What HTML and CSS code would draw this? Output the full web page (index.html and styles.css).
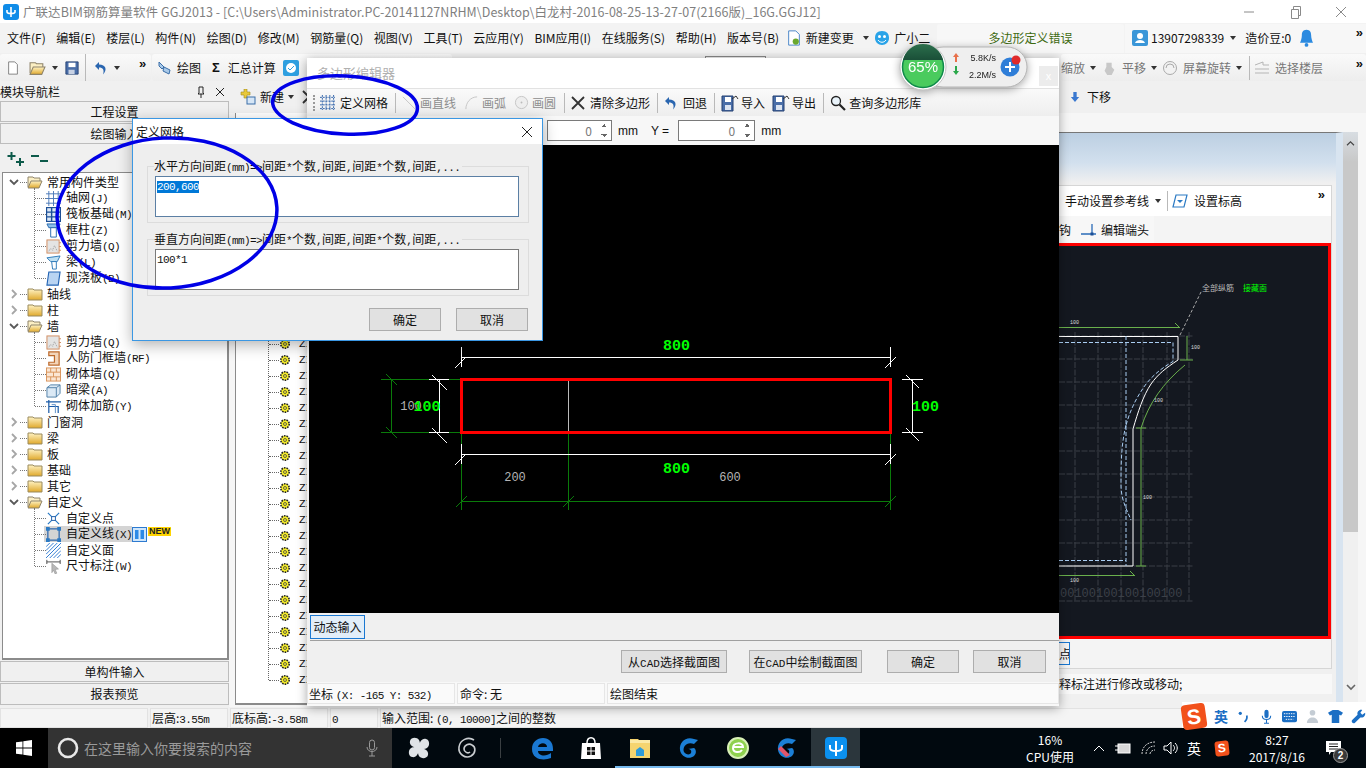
FILE: index.html
```html
<!DOCTYPE html>
<html lang="zh-CN">
<head>
<meta charset="utf-8">
<title>广联达BIM钢筋算量软件</title>
<link rel="stylesheet" href="styles.css">
</head>
<body>
<svg class="sprite" aria-hidden="true">
  <defs>
    <linearGradient id="gold" x1="0" y1="0" x2="0" y2="1"><stop offset="0" stop-color="#fff3c4"/><stop offset="1" stop-color="#e0a92c"/></linearGradient>
    <linearGradient id="ball" x1="0" y1="0" x2="0" y2="1"><stop offset="0" stop-color="#2b6f4c"/><stop offset="1" stop-color="#1a4f38"/></linearGradient>
    <symbol id="folder" viewBox="0 0 16 14"><path d="M1 3V2h5l1 1h8v10H1z" fill="url(#gold)" stroke="#9a8a5c"/></symbol>
    <symbol id="folder-open" viewBox="0 0 16 14"><path d="M1 12V2h5l1 1h6v3" fill="#fbefc4" stroke="#8f846a"/><path d="M1 13l3-7h11l-3 7z" fill="url(#gold)" stroke="#8f846a"/></symbol>
    <symbol id="chev-r" viewBox="0 0 10 10"><path d="M3 1l4 4-4 4" fill="none" stroke="#a6a6a6" stroke-width="1.8"/></symbol>
    <symbol id="chev-d" viewBox="0 0 10 10"><path d="M1 3l4 4 4-4" fill="none" stroke="#595959" stroke-width="1.8"/></symbol>
    <symbol id="i-grid" viewBox="0 0 16 16"><path d="M0 3h16M0 8h16M0 13h16M3 0v16M8 0v16M13 0v16" stroke="#4a78b8" fill="none"/></symbol>
    <symbol id="i-raft" viewBox="0 0 16 16"><rect x=".5" y=".5" width="15" height="15" fill="#dce8f6" stroke="#1c4f96" stroke-width="1.5"/><path d="M0 5.500h16M0 10.500h16M6 0v16" stroke="#1c4f96" stroke-width="1.500"/></symbol>
    <symbol id="i-col" viewBox="0 0 16 16"><path d="M1 1h14l-2 4H3z" fill="#8ec0ea" stroke="#2468ae"/><path d="M5 5h6v10H5z" fill="#fff" stroke="#2468ae"/></symbol>
    <symbol id="i-wall" viewBox="0 0 16 16"><rect x="1" y="1" width="13" height="14" fill="#e4e4e4" stroke="#d08a5c"/><path d="M3 13l2-3 2 2 2-5 3 6" stroke="#999" stroke-dasharray="1 1" fill="none"/><path d="M14 4h2M14 8h2M14 12h2" stroke="#d08a5c"/></symbol>
    <symbol id="i-beam" viewBox="0 0 16 16"><path d="M1 3l14-2-3 6H5z" fill="#bfe0f2" stroke="#2a78b8"/><path d="M6 7h5v8H7z" fill="#fff" stroke="#2a78b8"/></symbol>
    <symbol id="i-slab" viewBox="0 0 16 16"><path d="M3 1h12l-2 14H1z" fill="#b9d4f2" stroke="#2464b4" stroke-width="1.200"/></symbol>
    <symbol id="i-door" viewBox="0 0 16 16"><path d="M3 1h11v14H3v-3h6V5H3z" fill="#f3d5ba" stroke="#bd6a2c" stroke-width="1.300"/></symbol>
    <symbol id="i-brick" viewBox="0 0 16 16"><rect x=".5" y="1" width="15" height="14" fill="#fbe6d3" stroke="#d8935a"/><path d="M0 5.500h16M0 10.500h16M5 1v4.500M11 1v4.500M8 5.500v5M5 10.500v4.500M11 10.500v4.500" stroke="#d8935a"/></symbol>
    <symbol id="i-dbeam" viewBox="0 0 16 16"><path d="M1 5l4-3h10v9l-4 4H1z" fill="#dbe9f5" stroke="#4f7fa8"/><path d="M1 5h10v10M11 5l4-3" stroke="#4f7fa8" fill="none"/></symbol>
    <symbol id="i-rebar" viewBox="0 0 16 16"><path d="M0 3h16M3 1v14M3 8h10v7" stroke="#1c5ca8" stroke-width="1.300" fill="none"/><path d="M6 6h4v9" stroke="#5a8cc8" fill="none"/></symbol>
    <symbol id="i-point" viewBox="0 0 16 16"><path d="M2 2l12 12M14 2L2 14" stroke="#2b7ac4" stroke-width="1.300"/><rect x="6" y="6" width="4" height="4" fill="#fff" stroke="#1c5ca8"/></symbol>
    <symbol id="i-line" viewBox="0 0 16 16"><rect x="2" y="2" width="12" height="12" fill="none" stroke="#1c5ca8" stroke-width="1.200"/><path d="M0 0h4v4H0zM12 0h4v4h-4zM0 12h4v4H0zM12 12h4v4h-4z" fill="#2b7ac4"/></symbol>
    <symbol id="i-hatch" viewBox="0 0 16 16"><path d="M0 4l4-4M0 8l8-8M0 12L12 0M0 16L16 0M4 16L16 4M8 16l8-8M12 16l4-4" stroke="#2b78d0"/></symbol>
    <symbol id="i-dim" viewBox="0 0 16 18"><path d="M0 1v5M16 1v5M0 3.500h16" stroke="#333"/><path d="M6 5l8 7-4 .5 2 4.500-2 1-2-4.500-2 3z" fill="#b8b8b8" stroke="#888" stroke-width=".6"/></symbol>
    <symbol id="i-gear" viewBox="0 0 12 12"><circle cx="6" cy="6" r="4.200" fill="#f6ee2a" stroke="#222" stroke-width="1.600" stroke-dasharray="1.600 1"/><circle cx="6" cy="6" r="1.500" fill="#f6ee2a" stroke="#444" stroke-width=".8"/></symbol>
    <symbol id="i-defgrid" viewBox="0 0 16 16"><path d="M0 2.500h16M0 6.500h16M0 10.500h16M0 14.500h16M2.500 0v16M6.500 0v16M10.500 0v16M14.500 0v16" stroke="#2b5fa8" stroke-dasharray="2 1"/></symbol>
    <symbol id="i-x" viewBox="0 0 14 14"><path d="M1 1l12 12M13 1L1 13" stroke="#333" stroke-width="1.800"/></symbol>
    <symbol id="i-undo" viewBox="0 0 14 14"><path d="M5 1L1 5l4 4V6.500c4 0 5.500 2.500 4 7 4.500-4.500 3-10-4-10z" fill="#2a66b0"/></symbol>
    <symbol id="i-disk" viewBox="0 0 16 16"><path d="M1 1h14v14H1z" fill="#4a6ea8" stroke="#223f70"/><rect x="4" y="2" width="8" height="5" fill="#fff"/><rect x="4" y="10" width="7" height="5" fill="#c8d2e4"/></symbol>
    <symbol id="i-inout" viewBox="0 0 18 18"><path d="M1 2h11v15H1z" fill="#4a6ea8" stroke="#223f70"/><rect x="4" y="3" width="6" height="5" fill="#fff"/><rect x="4" y="11" width="6" height="5" fill="#dbe3f0"/><path d="M11 5l4-3 2 3" fill="none" stroke="#333"/></symbol>
    <symbol id="i-search" viewBox="0 0 16 16"><circle cx="6" cy="6" r="4.500" fill="#eaf4fb" stroke="#222" stroke-width="1.300"/><path d="M9.500 9.500L15 15" stroke="#222" stroke-width="2.200"/></symbol>
    <symbol id="g-blue" viewBox="0 0 24 24"><path d="M17 3c-8-3-15 3-14 11 1 7 9 10 14 6 3-3 2-7 0-8l-6 1c2 0 4 1 3 4-1 2-5 2-7-1-2-5 3-11 10-8l4-4z" fill="#1b7fd6"/></symbol>
  </defs>
</svg>

<div class="app">
  <header class="titlebar">
    <svg class="app-logo" viewBox="0 0 16 16"><rect width="16" height="16" rx="3" fill="#0f8ce8"/><path d="M8 3v10M4 6v2c0 2 8 2 8 0V6" stroke="#fff" stroke-width="1.600" fill="none"/></svg>
    <span class="title-text">广联达BIM钢筋算量软件 GGJ2013 - [C:\Users\Administrator.PC-20141127NRHM\Desktop\白龙村-2016-08-25-13-27-07(2166版)_16G.GGJ12]</span>
    <div class="win-btns">
      <svg viewBox="0 0 46 22"><path d="M18 11h10" stroke="#8a8a8a"/></svg>
      <svg viewBox="0 0 46 22"><path d="M19.500 8.500h7v9h-7zM21.500 8.500v-3h7v9h-2" fill="none" stroke="#8a8a8a"/></svg>
      <svg viewBox="0 0 46 22"><path d="M18 6l10 10M28 6L18 16" stroke="#8a8a8a"/></svg>
    </div>
  </header>

  <nav class="menubar">
    <div class="menu-items">
      <span>文件(F)</span><span>编辑(E)</span><span>楼层(L)</span><span>构件(N)</span><span>绘图(D)</span><span>修改(M)</span><span>钢筋量(Q)</span><span>视图(V)</span><span>工具(T)</span><span>云应用(Y)</span><span>BIM应用(I)</span><span>在线服务(S)</span><span>帮助(H)</span><span>版本号(B)</span>
      <span class="with-icon change"><svg class="ic16" viewBox="0 0 16 18"><path d="M2 1h8l4 4v12H2z" fill="#fff" stroke="#3b7cc4"/><circle cx="10" cy="13" r="3.500" fill="#6aa82e"/></svg>新建变更<i class="caret"></i></span>
      <span class="with-icon"><svg class="ic16" viewBox="0 0 16 16"><path d="M8 1c5 0 7 3 7 7s-3 7-7 7-7-3-7-7 2-7 7-7z" fill="#29a3e8"/><circle cx="5.500" cy="6.500" r="1.500" fill="#fff"/><circle cx="10.500" cy="6.500" r="1.500" fill="#fff"/><path d="M4 10c2 3 6 3 8 0" stroke="#fff" fill="none"/></svg>广小二</span>
    </div>
    <div class="error-tab">多边形定义错误</div>
    <div class="user-area">
      <svg class="ic16" viewBox="0 0 16 16"><rect width="16" height="16" rx="2" fill="#3a96d8"/><circle cx="8" cy="6" r="3" fill="#fff"/><path d="M3 13c1-4 9-4 10 0z" fill="#fff"/></svg>
      <span class="phone">13907298339</span><i class="caret"></i>
      <span class="beans">造价豆:0</span>
      <svg class="bell" viewBox="0 0 14 20"><path d="M7 1c4 0 5 3 5 6s1 6 2 8H0c1-2 2-5 2-8s1-6 5-6z" fill="#2b8ae0"/><circle cx="7" cy="17.500" r="2" fill="#2b8ae0"/></svg>
      <span class="more">»</span>
    </div>
  </nav>

  <div class="toolbar">
    <div class="tool-group first">
      <svg class="ic14" viewBox="0 0 14 16"><path d="M2 1h7l3 3v11H2z" fill="#fff" stroke="#777"/></svg>
      <svg class="ic16 open" viewBox="0 0 16 14"><use href="#folder-open"/></svg><i class="caret"></i>
      <svg class="ic14 save" viewBox="0 0 16 16"><use href="#i-disk"/></svg>
      <b class="sep"></b>
      <svg class="ic14" viewBox="0 0 14 14"><use href="#i-undo"/></svg><i class="caret"></i>
      <span class="more">»</span>
    </div>
    <div class="tool-group second">
      <svg class="ic16" viewBox="0 0 16 16"><path d="M2 2l5 5-2 2-3-3zM7 7l6 3-1 4-6-3z" fill="#a9c9e8" stroke="#3a6ea8"/></svg><span>绘图</span>
      <b class="sigma">Σ</b><span>汇总计算</span>
      <svg class="ic16" viewBox="0 0 16 16"><rect width="16" height="16" rx="2" fill="#2e9fe0"/><circle cx="8" cy="8" r="5" fill="#fff"/><path d="M5 8l2 2 4-4" stroke="#2e9fe0" fill="none"/></svg>
    </div>
    <div class="tab-stub"></div>
    <div class="tool-group right">
      <span class="muted">缩放</span><i class="caret"></i>
      <svg class="ic16" viewBox="0 0 16 18"><path d="M5 8V3h6v5l3 3-3 6H6L3 12z" fill="#c8c8c8"/></svg><span class="muted">平移</span><i class="caret"></i>
      <svg class="ic16" viewBox="0 0 16 16"><circle cx="8" cy="8" r="6.500" fill="#f2f2f2" stroke="#aaa"/><path d="M4 8a4 4 0 0 1 8 0" fill="none" stroke="#aaa"/></svg><span class="muted">屏幕旋转</span><i class="caret"></i>
      <b class="sep"></b>
      <svg class="ic16" viewBox="0 0 16 16"><path d="M1 5l8-3v3H15M1 9h14M1 13h14" stroke="#b5b5b5" fill="none"/></svg><span class="muted">选择楼层</span>
      <span class="more">»</span>
    </div>
  </div>

  <div class="workspace">
    <aside class="nav-panel">
      <div class="nav-head"><span>模块导航栏</span><span class="nav-head-btns">
        <svg viewBox="0 0 10 12"><path d="M3 1h4v6l1 1H2l1-1zM5 8v4" stroke="#222" fill="none"/></svg>
        <svg viewBox="0 0 10 12"><path d="M1 2l8 8M9 2l-8 8" stroke="#222"/></svg></span></div>
      <div class="nav-btn">工程设置</div>
      <div class="nav-btn">绘图输入</div>
      <div class="tree-tools">
        <svg viewBox="0 0 18 16"><path d="M4.500 1v8M.5 5h8M13 7v8M9 11h8" stroke="#0d5a4a" stroke-width="2"/></svg>
        <svg viewBox="0 0 18 16"><path d="M0 5h8M9 10h8" stroke="#0d5a4a" stroke-width="2"/></svg>
      </div>
      <div class="tree">
        <div class="node"><svg class="chev"><use href="#chev-d"/></svg><svg class="fold"><use href="#folder-open"/></svg><span>常用构件类型</span></div>
        <div class="kids">
          <div class="leaf"><svg class="lic"><use href="#i-grid"/></svg><span>轴网<em>(J)</em></span></div>
          <div class="leaf"><svg class="lic"><use href="#i-raft"/></svg><span>筏板基础<em>(M)</em></span></div>
          <div class="leaf"><svg class="lic"><use href="#i-col"/></svg><span>框柱<em>(Z)</em></span></div>
          <div class="leaf"><svg class="lic"><use href="#i-wall"/></svg><span>剪力墙<em>(Q)</em></span></div>
          <div class="leaf"><svg class="lic"><use href="#i-beam"/></svg><span>梁<em>(L)</em></span></div>
          <div class="leaf"><svg class="lic"><use href="#i-slab"/></svg><span>现浇板<em>(B)</em></span></div>
        </div>
        <div class="node"><svg class="chev"><use href="#chev-r"/></svg><svg class="fold"><use href="#folder"/></svg><span>轴线</span></div>
        <div class="node"><svg class="chev"><use href="#chev-r"/></svg><svg class="fold"><use href="#folder"/></svg><span>柱</span></div>
        <div class="node"><svg class="chev"><use href="#chev-d"/></svg><svg class="fold"><use href="#folder-open"/></svg><span>墙</span></div>
        <div class="kids">
          <div class="leaf"><svg class="lic"><use href="#i-wall"/></svg><span>剪力墙<em>(Q)</em></span></div>
          <div class="leaf"><svg class="lic"><use href="#i-door"/></svg><span>人防门框墙<em>(RF)</em></span></div>
          <div class="leaf"><svg class="lic"><use href="#i-brick"/></svg><span>砌体墙<em>(Q)</em></span></div>
          <div class="leaf"><svg class="lic"><use href="#i-dbeam"/></svg><span>暗梁<em>(A)</em></span></div>
          <div class="leaf"><svg class="lic"><use href="#i-rebar"/></svg><span>砌体加筋<em>(Y)</em></span></div>
        </div>
        <div class="node"><svg class="chev"><use href="#chev-r"/></svg><svg class="fold"><use href="#folder"/></svg><span>门窗洞</span></div>
        <div class="node"><svg class="chev"><use href="#chev-r"/></svg><svg class="fold"><use href="#folder"/></svg><span>梁</span></div>
        <div class="node"><svg class="chev"><use href="#chev-r"/></svg><svg class="fold"><use href="#folder"/></svg><span>板</span></div>
        <div class="node"><svg class="chev"><use href="#chev-r"/></svg><svg class="fold"><use href="#folder"/></svg><span>基础</span></div>
        <div class="node"><svg class="chev"><use href="#chev-r"/></svg><svg class="fold"><use href="#folder"/></svg><span>其它</span></div>
        <div class="node"><svg class="chev"><use href="#chev-d"/></svg><svg class="fold"><use href="#folder-open"/></svg><span>自定义</span></div>
        <div class="kids">
          <div class="leaf"><svg class="lic"><use href="#i-point"/></svg><span>自定义点</span></div>
          <div class="leaf"><div class="sel"><svg class="lic"><use href="#i-line"/></svg><span>自定义线<em>(X)</em></span></div>
            <svg class="mini" viewBox="0 0 15 15"><rect x=".5" y=".5" width="14" height="14" fill="#cfe6fb" stroke="#2d7ad0"/><path d="M3 3h3.500v9H3zM8.500 3H12v9H8.500z" fill="#2d8ae6"/></svg><span class="new-badge">NEW</span></div>
          <div class="leaf"><svg class="lic"><use href="#i-hatch"/></svg><span>自定义面</span></div>
          <div class="leaf"><svg class="lic"><use href="#i-dim"/></svg><span>尺寸标注<em>(W)</em></span></div>
        </div>
      </div>
      <div class="nav-btn low">单构件输入</div>
      <div class="nav-btn low">报表预览</div>
    </aside>

    <main class="center">
      <div class="center-top">
        <svg class="ic16" viewBox="0 0 16 16"><path d="M4 0h3v3h3v3H7v3H4V6H1V3h3z" fill="#e8c83a" stroke="#a08a20" stroke-width=".6"/><rect x="7" y="8" width="8" height="7" fill="#d6e6f6" stroke="#3a6ea8"/></svg>
        <span class="new-label">新建</span><i class="caret"></i>
        <svg class="ic14 new-x" viewBox="0 0 14 14"><use href="#i-x"/></svg>
        <span class="down-item"><svg class="ic12" viewBox="0 0 12 12"><path d="M4 0h4v6h3l-5 6-5-6h3z" fill="#3a78d0"/></svg>下移</span>
      </div>
      <div class="center-body">
        <section class="list-panel">
          <div class="gears">
            <div class="g-row"><svg class="gear"><use href="#i-gear"/></svg><span>ZI</span></div><div class="g-row"><svg class="gear"><use href="#i-gear"/></svg><span>ZI</span></div>
            <div class="g-row"><svg class="gear"><use href="#i-gear"/></svg><span>ZI</span></div><div class="g-row"><svg class="gear"><use href="#i-gear"/></svg><span>ZI</span></div>
            <div class="g-row"><svg class="gear"><use href="#i-gear"/></svg><span>ZI</span></div><div class="g-row"><svg class="gear"><use href="#i-gear"/></svg><span>ZI</span></div>
            <div class="g-row"><svg class="gear"><use href="#i-gear"/></svg><span>ZI</span></div><div class="g-row"><svg class="gear"><use href="#i-gear"/></svg><span>ZI</span></div>
            <div class="g-row"><svg class="gear"><use href="#i-gear"/></svg><span>ZI</span></div><div class="g-row"><svg class="gear"><use href="#i-gear"/></svg><span>ZI</span></div>
            <div class="g-row"><svg class="gear"><use href="#i-gear"/></svg><span>ZI</span></div><div class="g-row"><svg class="gear"><use href="#i-gear"/></svg><span>ZI</span></div>
            <div class="g-row"><svg class="gear"><use href="#i-gear"/></svg><span>ZI</span></div><div class="g-row"><svg class="gear"><use href="#i-gear"/></svg><span>ZI</span></div>
            <div class="g-row"><svg class="gear"><use href="#i-gear"/></svg><span>ZI</span></div><div class="g-row"><svg class="gear"><use href="#i-gear"/></svg><span>ZI</span></div>
            <div class="g-row"><svg class="gear"><use href="#i-gear"/></svg><span>ZI</span></div><div class="g-row"><svg class="gear"><use href="#i-gear"/></svg><span>ZI</span></div>
            <div class="g-row"><svg class="gear"><use href="#i-gear"/></svg><span>ZI</span></div><div class="g-row"><svg class="gear"><use href="#i-gear"/></svg><span>ZI</span></div>
            <div class="g-row"><svg class="gear"><use href="#i-gear"/></svg><span>ZI</span></div><div class="g-row"><svg class="gear"><use href="#i-gear"/></svg><span>ZI</span></div>
          </div>
        </section>
        <section class="side-window">
          <div class="side-title"></div>
          <div class="side-inner">
            <div class="side-tools">
              <span>手动设置参考线</span><i class="caret"></i><b class="sep"></b>
              <svg class="ic16" viewBox="0 0 16 16"><path d="M4 2h11l-3 12H1z" fill="#fff" stroke="#2b7ac4" stroke-width="1.200"/><path d="M5 7h6l-3 3z" fill="#2b7ac4"/></svg><span>设置标高</span>
              <span class="more">»</span>
            </div>
            <div class="side-tools2"><span>钩</span>
              <svg class="ic16" viewBox="0 0 16 16"><path d="M0 12h15M11 2v10" stroke="#2b6cb8" stroke-width="1.300"/><rect x="9.500" y="10.500" width="3" height="3" fill="#1c4f96"/></svg><span>编辑端头</span></div>
            <div class="side-canvas">
              <svg viewBox="1059 246 270 390" width="270" height="390">
                <path class="grid" d="M1059 336h134M1059 359h134M1059 382h134M1059 405h134M1059 428h134M1059 451h134M1059 474h134M1059 497h134M1059 520h134M1059 543h134M1059 566h134M1075 332v270M1098 332v270M1121 332v270M1143 332v270M1167 332v270M1189 332v270"/>
                <path class="outline" d="M1059 336.500h119v23.500c-12 8-20 14-27 24-8 12-13 28-18 45v137h-74"/>
                <path class="inner-dash" d="M1059 342.500h114v19c-14 8-25 18-32 30-6 9-12 22-15 34M1126 336v230M1059 560.500h67M1126 425c-5 20-5 40-5 60 0 15 6 25 10 35"/>
                <path class="dim" d="M1059 327.500h120M1175 323l5 5M1187 336v24M1180 360h13M1185 365c-22 18-36 38-44 63v138M1136 428h10M1059 575.500h75M1130 571l5 5M1136 566h10"/>
                <path class="leader" d="M1180 335l22-45"/>
                <text class="cad-mini" x="1070" y="324">100</text>
                <text class="cad-mini" x="1191" y="349">100</text>
                <text class="cad-mini" x="1154" y="402">100</text>
                <text class="cad-mini" x="1143" y="499">100</text>
                <text class="cad-mini" x="1070" y="582">100</text>
                <text class="cad-label" x="1202" y="291">全部纵筋</text>
                <text class="cad-label green" x="1243" y="291">接藏面</text>
                <text class="cad-axis" x="1060" y="597">00100100100100100</text>
                <path class="grid" d="M1059 601h134"/>
              </svg>
            </div>
            <div class="side-btns"><span class="pt-btn">点</span></div>
          </div>
          <div class="side-status"><span>释标注进行修改或移动;</span></div>
        </section>
        <div class="vscroll">
          <div class="v-thumb"><svg viewBox="0 0 10 8"><path d="M1 6l4-4 4 4" fill="none" stroke="#444" stroke-width="1.300"/></svg></div>
          <svg class="v-down" viewBox="0 0 10 8"><path d="M1 2l4 4 4-4" fill="none" stroke="#666" stroke-width="1.600"/></svg>
        </div>
      </div>
    </main>
  </div>

  <footer class="statusbar">
    <div class="st c0"></div>
    <div class="st c1">层高:<em>3.55m</em></div>
    <div class="st c2">底标高:<em>-3.58m</em></div>
    <div class="st c3"><em>0</em></div>
    <div class="st c4">输入范围: <em>(0, 10000]</em>之间的整数</div>
  </footer>

  <div class="taskbar">
    <div class="start"><svg viewBox="0 0 16 16"><path d="M0 2.300l6.500-.9v6.200H0zM7.300 1.300L16 0v7.600H7.300zM0 8.400h6.500v6.200L0 13.700zM7.300 8.400H16V16l-8.700-1.300z" fill="#fff"/></svg></div>
    <div class="search">
      <svg class="cortana" viewBox="0 0 22 22"><circle cx="11" cy="11" r="9" fill="none" stroke="#e8e8e8" stroke-width="2.600"/></svg>
      <span>在这里输入你要搜索的内容</span>
      <svg class="mic" viewBox="0 0 12 18"><rect x="3.500" y="1" width="5" height="10" rx="2.500" fill="none" stroke="#9a9a9a"/><path d="M1 8c0 6 10 6 10 0M6 13v4M3 17h6" fill="none" stroke="#9a9a9a"/></svg>
    </div>
    <div class="tile"><svg viewBox="0 0 24 24"><path d="M12 12C6 12 2 9 3 5s7-4 9-1 0 8 0 8zM12 12c0-6 3-10 7-9s4 7 1 9-8 0-8 0zM12 12c6 0 10 3 9 7s-7 4-9 1 0-8 0-8zM12 12c0 6-3 10-7 9s-4-7-1-9 8 0 8 0z" fill="#dfe3e6"/></svg></div>
    <div class="tile"><svg viewBox="0 0 24 24"><path d="M18 4C12 0 4 4 3 11c-1 7 6 12 12 9 5-3 5-9 1-11-3-2-8 0-8 4 0 3 4 5 6 3" fill="none" stroke="#c9cdd0" stroke-width="1.600"/></svg></div>
    <div class="tile-sep"></div>
    <div class="tile"><svg viewBox="0 0 24 24"><path d="M2 13C2 6 7 2 13 2c6 0 10 4 10 11v2H8c0 5 8 6 13 2v5c-7 3-19 2-19-9zm6-2h9c0-5-8-5-9 0z" fill="#1a78d2"/></svg></div>
    <div class="tile"><svg viewBox="0 0 24 24"><path d="M3 7h18l1 16H2z" fill="#fff"/><path d="M8 7c0-7 8-7 8 0" fill="none" stroke="#fff" stroke-width="1.500"/><path d="M8 11h3.500v3.500H8zM12.500 11H16v3.500h-3.500zM8 15.500h3.500V19H8zM12.500 15.500H16V19h-3.500z" fill="#111"/></svg></div>
    <div class="tile on"><svg viewBox="0 0 24 24"><path d="M2 3h8l2 2h10v17H2z" fill="#f5d46f"/><rect x="2" y="4" width="20" height="3" fill="#fbe9a6"/><path d="M8 20v-6l4-3 4 3v6z" fill="#2f9bd8"/></svg></div>
    <div class="tile on"><svg viewBox="0 0 24 24"><use href="#g-blue"/></svg></div>
    <div class="tile on"><svg viewBox="0 0 24 24"><circle cx="12" cy="12" r="10" fill="#8fd14f" stroke="#d9f0b8" stroke-width="2"/><path d="M7 11h10c0-5-10-5-10 1 0 5 7 5 9 2" fill="none" stroke="#fff" stroke-width="2"/></svg></div>
    <div class="tile on"><svg viewBox="0 0 24 24"><use href="#g-blue"/><path d="M3 13l8 8 4-2-9-9z" fill="#e2556a"/></svg></div>
    <div class="tile on active"><svg viewBox="0 0 24 24"><rect x="1" y="1" width="22" height="22" rx="4" fill="#0b90ee"/><path d="M12 5v15M6 9v3c0 4 12 4 12 0V9" stroke="#fff" stroke-width="2" fill="none"/></svg></div>
    <div class="cpu"><span>16%</span><span>CPU使用</span></div>
    <div class="tray">
      <svg viewBox="0 0 12 8" class="t-up"><path d="M1 7l5-5 5 5" fill="none" stroke="#fff"/></svg>
      <svg viewBox="0 0 16 12" class="t-batt"><rect x="3" y="2" width="12" height="9" fill="#d8d8d8" stroke="#fff"/><path d="M0 4h3M0 8h3" stroke="#fff"/></svg>
      <svg viewBox="0 0 16 14" class="t-wifi"><path d="M1 13c0-7 5-12 13-12M5 13c0-4 3-8 9-8M9 13c0-2 2-4 5-4" fill="none" stroke="#cfcfcf" stroke-dasharray="2 1"/></svg>
      <svg viewBox="0 0 16 14" class="t-vol"><path d="M1 5h3l4-4v12l-4-4H1z" fill="none" stroke="#fff"/><path d="M10 4c2 2 2 4 0 6M12 2c3 3 3 7 0 10" fill="none" stroke="#fff"/></svg>
      <span class="t-en">英</span>
      <span class="t-s">S</span>
      <div class="clock"><span>8:27</span><span>2017/8/16</span></div>
      <div class="notify"><svg viewBox="0 0 16 14"><path d="M0 0h15v11H5l-2 3v-3H0z" fill="#fff"/><path d="M3 3h9M3 5.500h9M3 8h9" stroke="#222"/></svg><span class="n-badge">2</span></div>
    </div>
  </div>
</div>

<section class="editor">
  <div class="ed-title">多边形编辑器<span class="ed-close">x</span></div>
  <div class="ed-tools">
    <span class="grip"></span>
    <svg class="ic15" viewBox="0 0 16 16"><use href="#i-defgrid"/></svg><span class="t">定义网格</span><b class="sep"></b>
    <svg class="ic15" viewBox="0 0 16 16"><path d="M1 2l13 13" stroke="#c4c4c4"/></svg><span class="t off">画直线</span>
    <svg class="ic15" viewBox="0 0 16 16"><path d="M2 15C2 8 7 2 14 2" stroke="#c4c4c4" fill="none"/></svg><span class="t off">画弧</span>
    <svg class="ic15" viewBox="0 0 16 16"><circle cx="8" cy="8" r="6.500" fill="#eee" stroke="#c4c4c4"/><circle cx="8" cy="8" r="1" fill="#bbb"/></svg><span class="t off">画圆</span><b class="sep"></b>
    <svg class="ic14" viewBox="0 0 14 14"><use href="#i-x"/></svg><span class="t">清除多边形</span><b class="sep"></b>
    <svg class="ic14" viewBox="0 0 14 14"><use href="#i-undo"/></svg><span class="t">回退</span><b class="sep"></b>
    <svg class="ic18" viewBox="0 0 18 18"><use href="#i-inout"/></svg><span class="t tight">导入</span>
    <svg class="ic18" viewBox="0 0 18 18"><use href="#i-inout"/></svg><span class="t tight">导出</span><b class="sep"></b>
    <svg class="ic16" viewBox="0 0 16 16"><use href="#i-search"/></svg><span class="t q">查询多边形库</span>
  </div>
  <div class="ed-coords">
    <div class="spin"><span>0</span><i class="spin-arrows"></i></div><span class="mm">mm</span>
    <span class="y-label">Y =</span>
    <div class="spin wide"><span>0</span><i class="spin-arrows"></i></div><span class="mm m2">mm</span>
  </div>
  <div class="ed-canvas">
    <svg viewBox="309 145 750 468" width="750" height="468">
      <path class="d-green" d="M381 379.500h80M381 432.500h80M391.500 379v54M386 374l11 11M386 427l11 11M461.500 433v77M568.500 433v77M890.500 433v77M461 501.500h430M456 507l11-11M563 507l11-11M885 507l11-11"/>
      <path class="d-white" d="M429 379.500h20M429 432.500h20M439.500 379v53M432 375l15 15M432 428l15 15M461 357.500h430M461.500 347v20M890.500 347v20M455 368l11-11M885 368l11-11M461 454.500h430M461.500 444v20M890.500 444v20M455 465l11-11M885 465l11-11M902 379.500h21M902 432.500h21M912.500 379v53M906 375l13 13M906 428l13 13"/>
      <rect class="d-red" x="461.500" y="379.500" width="429" height="53"/>
      <path class="d-mid" d="M568.500 381v50"/>
      <text class="cad-big" x="676.500" y="350">800</text>
      <text class="cad-big" x="676.500" y="473">800</text>
      <text class="cad-grey" x="411" y="410">100</text>
      <text class="cad-big" x="427" y="411">100</text>
      <text class="cad-big" x="925.500" y="411">100</text>
      <text class="cad-grey" x="515" y="481">200</text>
      <text class="cad-grey" x="730" y="481">600</text>
    </svg>
  </div>
  <div class="ed-dyn"><span class="dyn-btn">动态输入</span></div>
  <div class="ed-actions">
    <span class="btn b1">从<em>CAD</em>选择截面图</span>
    <span class="btn b2">在<em>CAD</em>中绘制截面图</span>
    <span class="btn b3">确定</span>
    <span class="btn b3">取消</span>
  </div>
  <div class="ed-status">
    <div class="es c1">坐标 <em>(X: -165 Y: 532)</em></div>
    <div class="es c2">命令: 无</div>
    <div class="es c3">绘图结束</div>
  </div>
</section>

<section class="dialog">
  <div class="dlg-title"><span>定义网格</span><svg viewBox="0 0 12 12"><path d="M1 1l10 10M11 1L1 11" stroke="#222"/></svg></div>
  <div class="dlg-body">
    <div class="fset">
      <div class="legend">水平方向间距<em>(mm)=&gt;</em>间距<em>*</em>个数<em>,</em>间距<em>,</em>间距<em>*</em>个数<em>,</em>间距<em>,...</em></div>
      <div class="field focus"><span class="selected">200,600</span></div>
    </div>
    <div class="fset">
      <div class="legend">垂直方向间距<em>(mm)=&gt;</em>间距<em>*</em>个数<em>,</em>间距<em>,</em>间距<em>*</em>个数<em>,</em>间距<em>,...</em></div>
      <div class="field">100*1</div>
    </div>
    <div class="dlg-actions"><span class="btn dlg">确定</span><span class="btn dlg">取消</span></div>
  </div>
</section>

<svg class="marks" viewBox="0 0 1366 768" aria-hidden="true">
  <ellipse cx="345" cy="105" rx="72.500" ry="29" transform="rotate(3 345 105)"/>
  <ellipse cx="167" cy="213" rx="110" ry="75" transform="rotate(-3 167 213)"/>
</svg>

<div class="net-widget">
  <svg viewBox="0 0 132 50" width="132" height="50">
    <rect x="24" y="4" width="104" height="40" rx="20" fill="#efefef" stroke="#b5b5b5"/>
    <circle cx="24" cy="24" r="23" fill="#fff" stroke="#c4c4c4"/>
    <circle cx="24" cy="24" r="20.500" fill="#4acb5e" stroke="#0f8a4a" stroke-width="1.500"/>
    <path d="M4 17a20.500 20.500 0 0 1 40 0z" fill="url(#ball)"/>
    <text class="w-pct" x="24" y="29">65%</text>
    <path d="M54 14l3-4 3 4h-2v5h-2v-5z" fill="#e8704a"/>
    <path d="M54 28l3 4 3-4h-2v-5h-2v5z" fill="#2aa84a"/>
    <text class="w-sp" x="97" y="18">5.8K/s</text>
    <text class="w-sp" x="97" y="35">2.2M/s</text>
    <circle cx="111" cy="24" r="9.500" fill="#2f7ed8"/>
    <path d="M111 19v10M106 24h10" stroke="#fff" stroke-width="2"/>
    <circle cx="117" cy="17" r="4.500" fill="#e02a2a"/>
  </svg>
</div>

<div class="ime">
  <span class="ime-s">S</span><span class="ime-en">英</span>
  <svg viewBox="0 0 12 14"><circle cx="3" cy="4" r="1.500" fill="#1c6fc4"/><path d="M9 6c1 3-1 5-2 6" stroke="#1c6fc4" stroke-width="1.600" fill="none"/></svg>
  <svg viewBox="0 0 12 18"><rect x="3.500" y="1" width="5" height="10" rx="2.500" fill="#1c6fc4"/><path d="M1 8c0 6 10 6 10 0M6 13v4M3 17h6" fill="none" stroke="#1c6fc4" stroke-width="1.300"/></svg>
  <svg viewBox="0 0 16 14"><rect x="0" y="1" width="16" height="12" rx="2" fill="#1c6fc4"/><path d="M2 4h12M2 7h12M4 10h8" stroke="#fff" stroke-dasharray="1.500 1"/></svg>
  <svg viewBox="0 0 16 16"><circle cx="8" cy="4" r="3" fill="#c4ccd4"/><path d="M2 15c0-8 12-8 12 0z" fill="#c4ccd4"/></svg>
  <svg viewBox="0 0 16 16"><path d="M5 1h6l5 3-2 3-2-1v9H4V6L2 7 0 4z" fill="#1c6fc4"/></svg>
  <svg viewBox="0 0 16 16"><path d="M15 4l-3 2-2-2 2-3c-3-1-6 2-5 5L1 12c-1 2 1 4 3 3l6-6c3 1 6-2 5-5z" fill="#1c6fc4"/></svg>
</div>
</body>
</html>
```
FILE: styles.css
```css
* { box-sizing: border-box; }
html, body { margin: 0; height: 100%; overflow: hidden; }
body {
  position: relative;
  width: 1366px;
  height: 768px;
  background: #f0f0f0;
  color: #111;
  font: 12px/16px "Noto Sans CJK SC", "Liberation Sans", sans-serif;
}
em { font-style: normal; }
.sprite { position: absolute; width: 0; height: 0; }
.app { width: 1366px; height: 768px; display: flex; flex-direction: column; }

svg { display: block; flex: none; }
.ic12 { width: 12px; height: 12px; }
.ic14 { width: 14px; height: 14px; }
.ic15 { width: 15px; height: 15px; }
.ic16 { width: 16px; height: 16px; }
.ic18 { width: 18px; height: 18px; }
.caret { width: 0; height: 0; border: 3px solid transparent; border-top: 4px solid #333; border-bottom: 0; flex: none; }
.sep { width: 1px; height: 20px; background: #b9b9b9; flex: none; }
.more { font: 700 13px/12px "Liberation Sans", sans-serif; color: #111; }

/* title bar */
.titlebar { height: 23px; background: #fff; display: flex; align-items: center; padding-left: 3px; color: #7f7f7f; flex: none; }
.app-logo { width: 16px; height: 16px; margin-right: 4px; }
.title-text { font-size: 12.500px; white-space: nowrap; letter-spacing: .05px; }
.win-btns { margin-left: auto; display: flex; margin-right: 2px; gap: 0; }
.win-btns svg { width: 46px; height: 22px; }

/* menu bar */
.menubar { height: 30px; display: flex; align-items: center; background: #f3f3f3; padding-left: 7px; flex: none; }
.menu-items { display: flex; align-items: center; gap: 10.600px; white-space: nowrap; width: 930px; flex: none; }
.with-icon { display: flex; align-items: center; gap: 4px; }
.with-icon .caret { margin-left: 5px; }
.with-icon.change { margin-left: -4px; }
.with-icon:last-child { margin-left: -5px; }
.error-tab { width: 187px; height: 29px; background: #f7f7f7; color: #3f6b12; text-align: center; line-height: 27px; flex: none; border-radius: 3px 3px 0 0; }
.user-area { display: flex; align-items: center; flex: 1; padding-left: 7px; height: 29px; background: #f7f7f7; margin-left: 1px; position: relative; }
.phone { margin-left: 3px; margin-right: 6px; }
.beans { margin-left: 9px; }
.bell { width: 13px; height: 20px; margin-left: 9px; }
.user-area .more { margin-left: auto; margin-right: 3px; align-self: flex-start; margin-top: 3px; }

/* main toolbar */
.toolbar { height: 31px; display: flex; align-items: flex-start; background: #f0f0f0; flex: none; }
.tool-group { height: 27px; margin-top: 1px; background: linear-gradient(#fafafa, #ededed); display: flex; align-items: center; border-radius: 3px; }
.tool-group.first { width: 151px; padding-left: 6px; }
.tool-group.first .open { margin-left: 9px; width: 17px; }
.tool-group.first .caret { margin-left: 6px; }
.tool-group.first .save { margin-left: 7px; }
.tool-group.first .sep { margin: 0 8px 0 6px; height: 27px; }
.tool-group.first .more { margin-left: 19px; align-self: flex-start; margin-top: 4px; }
.tool-group.second { margin-left: 1px; padding-left: 5px; width: 300px; gap: 4px; }
.sigma { margin: 0 4px 0 7px; font: 700 13px/1 "Liberation Sans", sans-serif; }
.tool-group.second .ic16 { margin-left: 3px; }
.tool-group.second .ic16:first-child { margin-left: 0; }
.tab-stub { width: 61px; height: 4px; margin: 3px 0 0 253px; border: 1px solid #888; border-bottom: 0; flex: none; }
.tool-group.right { width: 305px; margin-left: auto; padding-left: 0; gap: 5px; color: #777; }
.muted { color: #777; }
.tool-group.right .sep { height: 24px; margin: 0 2px; }
.tool-group.right .ic16:nth-last-of-type(1) { margin-left: -3px; }
.tool-group.right .more { margin-left: auto; margin-right: 3px; align-self: flex-start; margin-top: 4px; }

/* workspace */
.workspace { flex: 1; display: flex; min-height: 0; }
.nav-panel { width: 229px; display: flex; flex-direction: column; flex: none; }
.nav-head { height: 16px; display: flex; align-items: center; justify-content: space-between; padding: 0 2px 0 0; font-size: 12px; }
.nav-head-btns { display: flex; gap: 9px; margin-right: 2px; }
.nav-head-btns svg { width: 10px; height: 12px; }
.nav-btn { height: 21px; margin: 1px 0 0; border: 1px solid #bdbdbd; background: #f0f0f0; text-align: center; line-height: 19px; }
.tree-tools { height: 28px; display: flex; align-items: center; padding: 1px 0 0 7px; gap: 6px; }
.tree-tools svg { width: 18px; height: 16px; }
.tree { height: 488px; margin-left: 2px; background: #fff; border: 1px solid #8b8b8b; border-width: 1px 2px 2px 1px; padding-top: 1px; overflow: hidden; }
.nav-btn.low { margin-top: 1px; height: 21px; }
.nav-btn.low:last-child { height: 22px; }

.node, .leaf { height: 16px; display: flex; align-items: center; position: relative; white-space: nowrap; }
.node { padding-left: 6px; }
.chev { width: 10px; height: 10px; }
.fold { width: 16px; height: 14px; margin-left: 8px; margin-right: 4px; }
.node::before { content: ""; position: absolute; left: 17px; width: 7px; border-top: 1px dotted #777; }
.leaf em, .legend em, .st em, .es em, .btn em { font: 11px/16px "Liberation Mono", monospace; letter-spacing: -.6px; }
.btn em { letter-spacing: 0; }
.kids { position: relative; }
.kids::before { content: ""; position: absolute; left: 31px; top: -2px; bottom: 8px; border-left: 1px dotted #777; }
.leaf { padding-left: 43px; }
.leaf::before { content: ""; position: absolute; left: 32px; width: 11px; border-top: 1px dotted #777; }
.lic { width: 15px; height: 15px; margin-right: 5px; }
.sel { display: flex; align-items: center; background: #d4d4d4; height: 16px; width: 88px; margin-left: -2px; padding-left: 2px; }
.mini { width: 15px; height: 15px; margin-left: 0; }
.new-badge { font: 700 9px/9px "Liberation Sans", sans-serif; background: #ffd400; color: #222; padding: 0 1px; margin: -5px 0 0 1px; }

/* center */
.center { flex: 1; display: flex; flex-direction: column; min-width: 0; }
.center-top { height: 29px; display: flex; align-items: center; padding: 0 0 4px 11px; flex: none; }
.new-label { margin: 0 4px; }
.new-x { margin-left: 8px; }
.down-item { margin-left: auto; margin-right: 255px; display: flex; align-items: center; gap: 7px; }
.down-item .ic12 { width: 10px; height: 12px; }
.center-body { flex: 1; display: flex; min-height: 0; background: #f6f6f6; }
.list-panel { width: 824px; margin: 0 0 2px 6px; background: #fff; border: 1px solid #8b8b8b; border-width: 0 0 2px 1px; padding-top: 223px; overflow: hidden; flex: none; }
.gears { position: relative; margin-left: 32px; }
.gears::before { content: ""; position: absolute; left: 0; top: -2px; bottom: 8px; border-left: 1px dotted #666; }
.g-row { height: 16px; display: flex; align-items: center; position: relative; padding-left: 11px; font: 11px/16px "Liberation Mono", monospace; }
.g-row::before { content: ""; position: absolute; left: 1px; width: 10px; border-top: 1px dotted #666; }
.gear { width: 12px; height: 12px; margin-right: 8px; }
.side-window { width: 284px; flex: none; margin: 19px 0 0; background: linear-gradient(#bccfe2 0, #d2e0ee 30px, #f0f0f0 50px); border-top: 1px solid #777; border-right: 7px solid #d8e4f0; display: flex; flex-direction: column; }
.side-title { height: 52px; flex: none; }
.side-inner { width: 273px; height: 484px; background: #f4f4f4; border: 1px solid #d6d6d6; border-left: 0; flex: none; display: flex; flex-direction: column; }
.side-tools { height: 30px; background: #fff; display: flex; align-items: center; padding: 0 6px; gap: 6px; flex: none; }
.side-tools .ic16 { margin-left: -2px; }
.side-tools .more { margin-left: auto; align-self: flex-start; margin-top: 3px; }
.side-tools2 { width: 95px; height: 27px; background: #f7f7f7; display: flex; align-items: center; gap: 4px; flex: none; }
.side-tools2 .ic16 { margin-left: 6px; }
.side-canvas { width: 272px; height: 396px; background: #141820; border: 3px solid #f00; border-left: 0; flex: none; }
.side-btns { flex: 1; padding-top: 3px; }
.pt-btn { display: block; width: 11px; height: 23px; border: 1px solid #1a78d2; border-left: 0; overflow: hidden; line-height: 22px; }
.side-status { height: 20px; margin-top: 5px; padding-top: 2px; width: 273px; background: #f8f8f8; flex: none; }
.vscroll { width: 15px; flex: none; margin-top: 19px; margin-right: 8px; background: #f0f0f0; position: relative; display: flex; flex-direction: column; align-items: center; }
.v-thumb { width: 15px; height: 400px; background: linear-gradient(#d8dde2 0, #c8c8c8 30px); padding: 8px 3px; }
.v-thumb svg { width: 9px; height: 7px; }
.v-down { width: 10px; height: 8px; margin-top: auto; margin-bottom: 16px; }

.grid { stroke: #3a3e46; fill: none; stroke-dasharray: 6 1.500; }
.outline { stroke: #fff; fill: none; }
.inner-dash { stroke: #a9cdf2; fill: none; stroke-dasharray: 4 2; }
.dim { stroke: #6ab04c; fill: none; }
.leader { stroke: #aaa; stroke-dasharray: 3 2; fill: none; }
.cad-mini { font: 5px "Liberation Mono", monospace; fill: #ddd; }
.cad-label { font: 8px "Noto Sans CJK SC", sans-serif; fill: #bbb; }
.cad-label.green { fill: #0f0; }
.cad-axis { font: 12px "Liberation Mono", monospace; fill: #3c4048; }

/* status bar */
.statusbar { height: 21px; display: flex; background: #f0f0f0; flex: none; gap: 2px; padding-top: 1px; }
.st { border: 1px solid #e2e2e2; background: #f4f4f4; padding-left: 1px; line-height: 18px; white-space: nowrap; }
.st.c0 { width: 148px; }
.st.c1 { width: 78px; }
.st.c2 { width: 98px; }
.st.c3 { width: 48px; }
.st.c4 { flex: 1; border-right: 0; }

/* taskbar */
.taskbar { height: 40px; display: flex; align-items: stretch; background: #01090f; flex: none; color: #fff; }
.start { width: 48px; background: #000; display: flex; align-items: center; justify-content: center; flex: none; }
.start svg { width: 16px; height: 16px; }
.search { width: 344px; background: #333; display: flex; align-items: center; padding-left: 9px; color: #9a9a9a; font-size: 14px; flex: none; margin-right: 2px; }
.cortana { width: 22px; height: 22px; margin-right: 5px; }
.mic { width: 12px; height: 18px; margin-left: auto; margin-right: 14px; }
.tile { width: 49px; display: flex; align-items: center; justify-content: center; flex: none; }
.tile svg { width: 24px; height: 24px; }
.tile-sep { width: 25px; position: relative; flex: none; }
.tile-sep::before { content: ""; position: absolute; left: 8px; top: 10px; bottom: 10px; border-left: 1px solid #3a3f42; }
.tile.on { box-shadow: inset 0 -2px 0 #76b9ed; background-clip: padding-box; }
.tile.active { background: #2b363c; }
.cpu { width: 86px; margin-left: 147px; display: flex; flex-direction: column; align-items: center; justify-content: center; font-size: 12px; line-height: 17px; flex: none; }
.tray { flex: 1; display: flex; align-items: center; position: relative; }
.t-up { width: 12px; height: 8px; }
.t-batt { width: 16px; height: 12px; margin-left: 10px; }
.t-wifi { width: 16px; height: 14px; margin-left: 10px; }
.t-vol { width: 16px; height: 14px; margin-left: 6px; }
.t-en { margin-left: 8px; width: 14px; font-size: 14px; }
.t-s { width: 14px; height: 15px; background: #f2511b; border-radius: 3px; font: 700 12px/15px "Liberation Sans", sans-serif; text-align: center; margin-left: 14px; transform: rotate(-6deg); }
.clock { display: flex; flex-direction: column; align-items: center; width: 62px; margin-left: 17px; line-height: 17px; }
.notify { margin-left: 18px; position: relative; }
.notify svg { width: 16px; height: 14px; }
.n-badge { position: absolute; left: 7px; top: 7px; width: 15px; height: 15px; border-radius: 50%; background: #3a3a3a; border: 1px solid #9a9a9a; font: 700 10px/13px "Liberation Sans", sans-serif; text-align: center; }

/* editor window */
.editor { position: absolute; left: 307px; top: 58px; width: 752px; height: 648px; background: #f0f0f0; display: flex; flex-direction: column; box-shadow: 0 2px 10px rgba(0,0,0,.35); }
.ed-title { height: 30px; background: #fff; color: #b0b0b0; padding: 7px 0 0 10px; font-size: 13px; flex: none; position: relative; }
.ed-close { position: absolute; right: 1px; top: 8px; width: 19px; height: 20px; background: #ececec; color: #fff; text-align: center; font-size: 11px; line-height: 18px; }
.ed-tools { height: 28px; display: flex; align-items: center; padding-left: 6px; background: linear-gradient(#fafafa, #eeeeee); border-top: 1px solid #e2e2e2; flex: none; }
.grip { width: 2px; height: 16px; border-left: 2px dotted #999; margin-right: 5px; }
.t { margin-left: 5px; margin-right: 7px; white-space: nowrap; }
.t.off { color: #8d8d8d; margin-left: 3px; margin-right: 8px; }
.t.tight { margin-left: 2px; margin-right: 7px; }
.t.q { margin-left: 3px; }
.ed-tools .sep { margin-right: 6px; }
.ed-coords { height: 29px; display: flex; align-items: center; padding-left: 240px; background: #f7f7f7; flex: none; }
.spin { width: 65px; height: 21px; background: #fff; border: 1px solid #7a7a7a; display: flex; align-items: center; justify-content: flex-end; padding-right: 4px; color: #7a7a7a; gap: 9px; }
.spin.wide { width: 77px; margin-left: 9px; }
.spin-arrows { width: 6px; height: 14px; background:
  linear-gradient(135deg, transparent 50%, #666 50%) 0 0/3px 3px no-repeat,
  linear-gradient(225deg, transparent 50%, #666 50%) 3px 0/3px 3px no-repeat,
  linear-gradient(45deg, transparent 50%, #666 50%) 0 10px/3px 3px no-repeat,
  linear-gradient(315deg, transparent 50%, #666 50%) 3px 10px/3px 3px no-repeat; }
.mm { margin-left: 6px; font-family: "Liberation Sans", sans-serif; }
.mm.m2 { margin-left: 6px; }
.y-label { margin-left: 13px; font-family: "Liberation Sans", sans-serif; }
.ed-canvas { height: 468px; margin-left: 2px; background: #000; flex: none; }
.d-green { stroke: #0a7a0a; fill: none; }
.d-white { stroke: #fff; fill: none; }
.d-red { stroke: #f00; stroke-width: 3; fill: none; }
.d-mid { stroke: #bbb; }
.cad-big { font: 700 15px "Liberation Mono", monospace; fill: #0f0; text-anchor: middle; }
.cad-grey { font: 12px "Liberation Mono", monospace; fill: #b5b5b5; text-anchor: middle; }
.ed-dyn { height: 28px; margin-left: 3px; padding-top: 2px; border-bottom: 1px solid #a0a0a0; flex: none; }
.dyn-btn { display: block; width: 55px; height: 24px; background: #e2eef9; border: 1px solid #1a78d2; text-align: center; line-height: 22px; }
.ed-actions { height: 41px; display: flex; align-items: center; padding: 0 0 0 314px; flex: none; background: #f0f0f0; }
.btn { display: block; height: 23px; background: #e1e1e1; border: 1px solid #adadad; text-align: center; line-height: 21px; white-space: nowrap; }
.btn.b1 { width: 106px; }
.btn.b2 { width: 113px; margin-left: 22px; }
.btn.b3 { width: 72px; margin-left: 25px; }
.btn.b3:last-child { margin-left: 14px; width: 73px; }
.ed-status { flex: 1; display: flex; gap: 2px; padding-top: 1px; background: #f8f8f8; }
.es { height: 21px; line-height: 20px; border: 1px solid #e6e6e6; background: #fafafa; padding-left: 1px; white-space: nowrap; }
.es.c1 { width: 148px; }
.es.c2 { width: 148px; padding-left: 2px; }
.es.c3 { flex: 1; padding-left: 2px; }

/* dialog */
.dialog { position: absolute; left: 132px; top: 118px; width: 411px; height: 223px; border: 1px solid #3b97e3; background: #eee; box-shadow: 0 4px 14px rgba(0,0,0,.3); display: flex; flex-direction: column; }
.dlg-title { height: 25px; background: #fff; display: flex; align-items: center; justify-content: space-between; padding: 0 9px 0 3px; flex: none; }
.dlg-title svg { width: 12px; height: 12px; }
.dlg-body { flex: 1; padding: 22px 14px 0 14px; }
.fset { position: relative; height: 57px; width: 382px; border: 1px solid #dcdcdc; padding: 9px 9px 0 7px; margin-bottom: 16px; }
.legend { position: absolute; left: 6px; top: -9px; background: #eee; line-height: 16px; padding-right: 2px; white-space: nowrap; }
.field { height: 41px; background: #fff; border: 1px solid #7a7a7a; padding: 3px 1px; font: 11px/14px "Liberation Mono", monospace; letter-spacing: -.6px; }
.field.focus { border-color: #5b7fa4; }
.selected { background: #0078d7; color: #fff; }
.dlg-actions { display: flex; justify-content: flex-end; gap: 15px; margin: -4px 0 0; }
.btn.dlg { width: 72px; height: 23px; }

/* overlays */
.marks { position: absolute; left: 0; top: 0; width: 1366px; height: 768px; pointer-events: none; }
.marks ellipse { fill: none; stroke: #0000e6; stroke-width: 3.500; }
.net-widget { position: absolute; left: 899px; top: 43px; filter: drop-shadow(0 2px 4px rgba(0,0,0,.35)); }
.w-pct { font: 15px "Liberation Sans", sans-serif; fill: #fff; text-anchor: middle; }
.w-sp { font: 9px "Liberation Sans", sans-serif; fill: #222; text-anchor: end; }
.ime { position: absolute; right: 0; top: 702px; height: 26px; width: 184px; background: #fff; display: flex; align-items: center; padding-top: 2px; gap: 8px; }
.ime svg { width: 15px; height: 15px; }
.ime-s { width: 25px; height: 25px; background: #f2511b; border-radius: 4px; color: #fff; font: 700 21px/25px "Liberation Sans", sans-serif; text-align: center; transform: rotate(-8deg); }
.ime-en { color: #1c6fc4; font-weight: 700; font-size: 14px; }
```
